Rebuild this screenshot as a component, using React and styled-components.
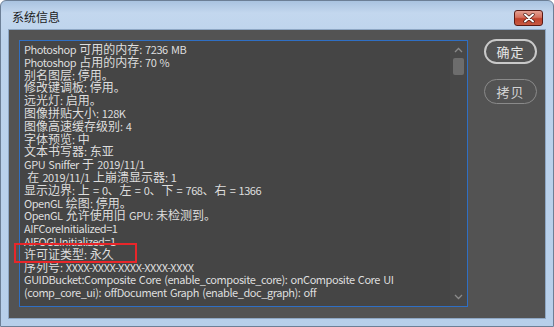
import React from "react";
import styled, { createGlobalStyle } from "styled-components";

const GlobalStyle = createGlobalStyle`
  html, body { margin: 0; padding: 0; background: #ffffff; }
  body { width: 554px; height: 327px; overflow: hidden; }
`;

const Window = styled.div`
  width: 554px;
  height: 327px;
  box-sizing: border-box;
  display: flex;
  flex-direction: column;
  padding: 0 8px 8px 8px;
  background: linear-gradient(180deg, #a9c3e0 0px, #c3d7ee 12px, #bcd3ec 40px, #b7cfea 100%);
  border: 1px solid #6c7f96;
  border-radius: 6px 6px 0 0;
  font-family: "Noto Sans CJK SC", "Noto Sans", sans-serif;
`;

const TitleBar = styled.div`
  height: 29px;
  display: flex;
  align-items: center;
  justify-content: space-between;
  padding: 0 2px 0 3px;
`;

const Title = styled.span`
  font-size: 12px;
  color: #1c1c1c;
  margin-top: 2px;
`;

const CloseButton = styled.div`
  width: 29px;
  height: 16px;
  box-sizing: border-box;
  margin-top: 4px;
  border: 1px solid #5a1a14;
  border-radius: 3px;
  background: linear-gradient(180deg, #e4a193 0%, #d57260 45%, #c0422c 55%, #c65a43 100%);
  display: flex;
  align-items: center;
  justify-content: center;
`;

const Client = styled.div`
  flex: 1;
  display: flex;
  align-items: flex-start;
  background: #535353;
  padding: 10px 8px 0 10px;
  box-shadow: 0 0 0 1px #8ea7c4;
`;

const TextBox = styled.div`
  position: relative;
  width: 450px;
  height: 267px;
  box-sizing: border-box;
  border: 1px solid #2f6fc4;
  background: #454545;
  display: flex;
`;

const TextContent = styled.div`
  flex: 1;
  padding: 2px 0 0 4px;
  font-size: 12px;
  line-height: 12.8px;
  color: #dedede;
  white-space: pre;
  overflow: hidden;
`;

const Line = styled.div`
  height: 12.8px;
`;

const Latin = styled.span`
  font-size: 11px;
  letter-spacing: -0.45px;
  word-spacing: 1.2px;
`;

const Scrollbar = styled.div`
  width: 17px;
  background: #484848;
  display: flex;
  flex-direction: column;
  align-items: center;
  padding: 6px 0 6px;
  box-sizing: border-box;
`;

const Thumb = styled.div`
  width: 11px;
  height: 17px;
  margin-top: 5px;
  background: #6d6d6d;
  border-radius: 2px;
`;

const Spacer = styled.div`
  flex: 1;
`;

const Highlight = styled.div`
  position: absolute;
  left: -6px;
  top: 202px;
  width: 123px;
  height: 20px;
  box-sizing: border-box;
  border: 2px solid #e8262a;
`;

const ButtonColumn = styled.div`
  display: flex;
  flex-direction: column;
  gap: 15px;
  margin-left: 16px;
  margin-top: -1px;
`;

const PillButton = styled.div`
  width: 53px;
  height: 25px;
  box-sizing: border-box;
  border-radius: 13px;
  border: ${(p) => (p.$primary ? "2px solid #c9c9c9" : "1px solid #8a8a8a")};
  color: ${(p) => (p.$primary ? "#e6e6e6" : "#d4d4d4")};
  font-size: 13px;
  display: flex;
  align-items: center;
  justify-content: center;
  letter-spacing: 1px;
`;

const lines = [
  "Photoshop 可用的内存: 7236 MB",
  "Photoshop 占用的内存: 70 %",
  "别名图层: 停用。",
  "修改键调板: 停用。",
  "远光灯: 启用。",
  "图像拼贴大小: 128K",
  "图像高速缓存级别: 4",
  "字体预览: 中",
  "文本书写器: 东亚",
  "GPU Sniffer 于 2019/11/1",
  " 在 2019/11/1 上崩溃显示器: 1",
  "显示边界: 上 = 0、左 = 0、下 = 768、右 = 1366",
  "OpenGL 绘图: 停用。",
  "OpenGL 允许使用旧 GPU: 未检测到。",
  "AIFCoreInitialized=1",
  "AIFOGLInitialized=1",
  "许可证类型: 永久",
  "序列号: XXXX-XXXX-XXXX-XXXX-XXXX",
  "GUIDBucket:Composite Core (enable_composite_core): onComposite Core UI",
  "(comp_core_ui): offDocument Graph (enable_doc_graph): off",
];

const CJK = /([\u3000-\u303f\u4e00-\u9fff\uff00-\uffef]+)/;

function renderLine(text) {
  return text
    .split(CJK)
    .filter((s) => s.length > 0)
    .map((seg, i) =>
      CJK.test(seg) ? <span key={i}>{seg}</span> : <Latin key={i}>{seg}</Latin>
    );
}

export default function App() {
  return (
    <>
      <GlobalStyle />
      <Window>
        <TitleBar>
          <Title>系统信息</Title>
          <CloseButton>
            <svg width="12" height="10" viewBox="0 0 12 10">
              <path d="M2 1.5 L10 8.5 M10 1.5 L2 8.5" stroke="#3b0f0a" strokeWidth="3.2" strokeLinecap="round" />
              <path d="M2 1.5 L10 8.5 M10 1.5 L2 8.5" stroke="#ffffff" strokeWidth="2" strokeLinecap="round" />
            </svg>
          </CloseButton>
        </TitleBar>
        <Client>
          <TextBox>
            <TextContent>
              {lines.map((l, i) => (
                <Line key={i}>{renderLine(l)}</Line>
              ))}
            </TextContent>
            <Scrollbar>
              <svg width="9" height="6" viewBox="0 0 9 6">
                <path d="M1 5 L4.5 1.5 L8 5" fill="none" stroke="#8a8a8a" strokeWidth="1.3" />
              </svg>
              <Thumb />
              <Spacer />
              <svg width="9" height="6" viewBox="0 0 9 6">
                <path d="M1 1 L4.5 4.5 L8 1" fill="none" stroke="#8a8a8a" strokeWidth="1.3" />
              </svg>
            </Scrollbar>
            <Highlight />
          </TextBox>
          <ButtonColumn>
            <PillButton $primary>确定</PillButton>
            <PillButton>拷贝</PillButton>
          </ButtonColumn>
        </Client>
      </Window>
    </>
  );
}
